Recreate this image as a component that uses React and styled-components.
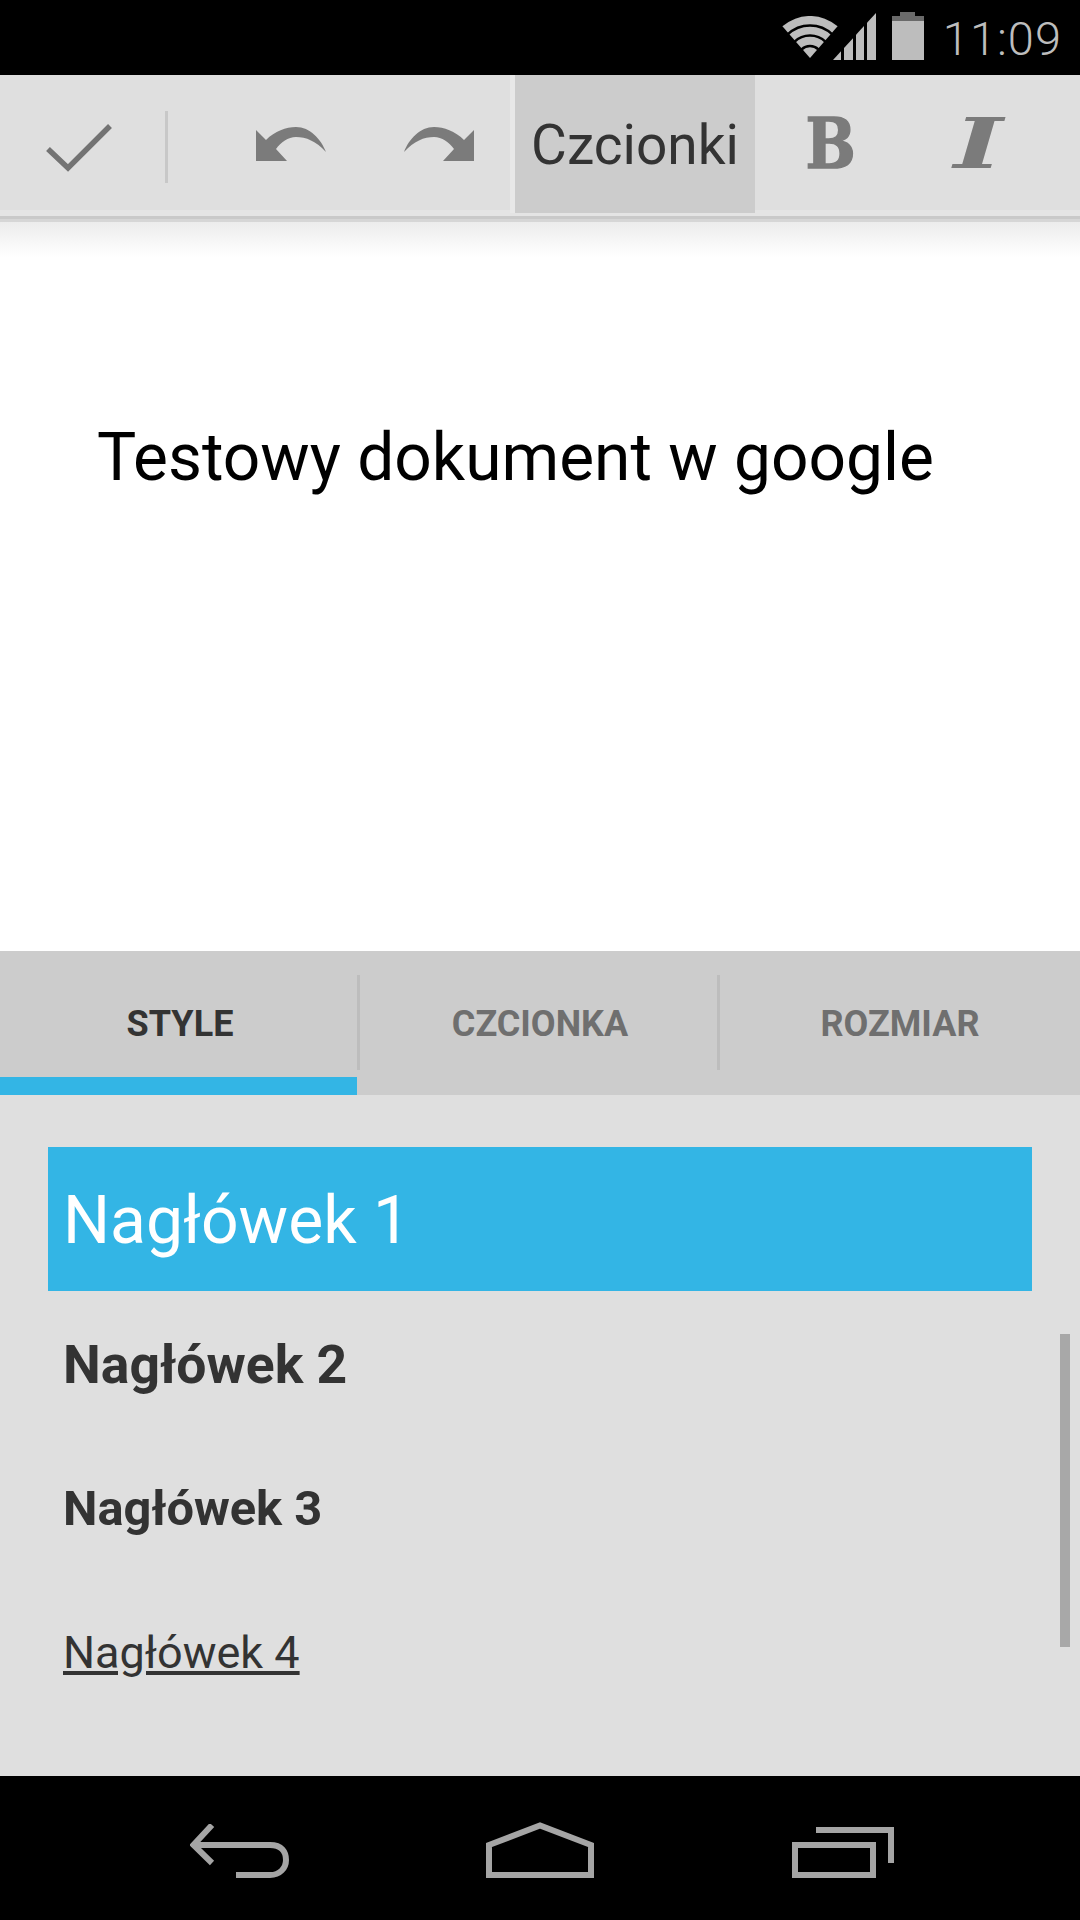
import React from "react";
import styled, { createGlobalStyle } from "styled-components";

const Global = createGlobalStyle`
  html, body { margin: 0; padding: 0; background: #fff; }
`;

const Screen = styled.div`
  width: 1080px;
  height: 1920px;
  display: flex;
  flex-direction: column;
  overflow: hidden;
  font-family: Roboto, "Liberation Sans", sans-serif;
`;

const StatusBar = styled.div`
  height: 75px;
  flex: none;
  background: #000;
  display: flex;
  align-items: flex-start;
  justify-content: flex-end;
  padding-right: 18px;
`;

const StatusIcon = styled.svg`
  display: block;
  flex: none;
  margin-top: ${(p) => p.$top}px;
  margin-right: ${(p) => p.$right || 0}px;
`;

const Clock = styled.span`
  color: #bdbdbd;
  font-size: 47px;
  font-weight: 300;
  line-height: 54px;
  margin-top: 12px;
  letter-spacing: 1px;
`;

const Toolbar = styled.div`
  flex: none;
  height: 147px;
  box-sizing: border-box;
  background: linear-gradient(#dfdfdf 135px, #e4e4e4 135px);
  display: flex;
  border-bottom: 3px solid #d6d6d6;
  position: relative;
`;

const ToolbarLine = styled.div`
  position: absolute;
  left: 0;
  right: 0;
  top: 141px;
  height: 3px;
  background: #c9c9c9;
`;

const CheckCell = styled.div`
  width: 165px;
  height: 138px;
  flex: none;
  box-sizing: border-box;
  padding: 49px 0 0 46px;
`;

const CheckMark = styled.svg`
  display: block;
`;

const Separator = styled.div`
  width: 3px;
  height: 72px;
  margin-top: 36px;
  background: #c8c8c8;
  flex: none;
`;

const ActionCell = styled.div`
  width: 138px;
  height: 138px;
  flex: none;
  display: flex;
  align-items: center;
  justify-content: center;
  margin-left: ${(p) => p.$left || 0}px;
`;

const ToolbarDivider = styled.div`
  width: 5px;
  height: 138px;
  margin-left: 2px;
  background: #e8e8e8;
  flex: none;
`;

const FontMenu = styled.div`
  width: 240px;
  height: 138px;
  flex: none;
  background: #cccccc;
  color: #333;
  font-size: 55px;
  display: flex;
  align-items: center;
  justify-content: center;
  box-sizing: border-box;
  padding-top: 2px;
`;

const FormatCell = styled.div`
  width: ${(p) => p.$w}px;
  height: 138px;
  flex: none;
  display: flex;
  align-items: center;
  justify-content: center;
  color: #7b7b7b;
  font-family: "DejaVu Serif", serif;
  font-weight: 700;
  font-style: ${(p) => (p.$italic ? "italic" : "normal")};
  font-size: 70px;
  line-height: 70px;
  -webkit-text-stroke: ${(p) => (p.$italic ? "0" : "1.5px #7b7b7b")};
`;

const FormatGlyph = styled.span`
  display: block;
  transform: scaleX(${(p) => p.$sx});
`;

const Document = styled.div`
  flex: none;
  height: 729px;
  box-sizing: border-box;
  padding: 198px 0 0 97px;
  background: linear-gradient(#ececec 0, #fff 35px);
  color: #000;
  font-size: 65.8px;
  line-height: 75px;
`;

const Tabs = styled.div`
  flex: none;
  height: 144px;
  display: flex;
  background: #cccccc;
`;

const Tab = styled.div`
  flex: 1;
  position: relative;
  display: flex;
  align-items: center;
  justify-content: center;
  box-sizing: border-box;
  padding-top: 2px;
  font-size: 36px;
  font-weight: 700;
  color: ${(p) => (p.$active ? "#333" : "#6f6f6f")};
  &::before {
    content: "";
    display: ${(p) => (p.$last ? "none" : "block")};
    position: absolute;
    right: 0;
    top: 24px;
    width: 3px;
    height: 95px;
    background: #bdbdbd;
  }
  &::after {
    content: "";
    display: ${(p) => (p.$active ? "block" : "none")};
    position: absolute;
    left: 0;
    right: 3px;
    bottom: 0;
    height: 18px;
    background: #33b5e5;
  }
`;

const Panel = styled.div`
  flex: none;
  height: 681px;
  box-sizing: border-box;
  position: relative;
  background: #dfdfdf;
  padding: 52px 48px 0;
`;

const StyleRow = styled.div`
  height: 144px;
  box-sizing: border-box;
  padding: 3px 0 0 15px;
  display: flex;
  align-items: center;
  color: ${(p) => (p.$selected ? "#fff" : "#333")};
  background: ${(p) => (p.$selected ? "#33b5e5" : "transparent")};
  font-size: ${(p) => p.$size}px;
  font-weight: ${(p) => p.$weight || 400};
  text-decoration: ${(p) => (p.$underline ? "underline" : "none")};
`;

const ScrollThumb = styled.div`
  position: absolute;
  left: 1060px;
  top: 239px;
  width: 10px;
  height: 313px;
  background: #a8a8a8;
`;

const NavBar = styled.div`
  flex: none;
  height: 144px;
  background: #000;
  display: flex;
  align-items: flex-start;
  padding-left: 190px;
`;

const NavIcon = styled.svg`
  display: block;
  flex: none;
  margin-top: ${(p) => p.$top}px;
  margin-right: ${(p) => p.$right || 0}px;
`;

function Wifi() {
  const arc = (r) => {
    const a = (44 * Math.PI) / 180;
    const dx = r * Math.sin(a);
    const dy = r * Math.cos(a);
    return `M${29 - dx} ${42 - dy}A${r} ${r} 0 0 1 ${29 + dx} ${42 - dy}`;
  };
  return (
    <StatusIcon $top={16} $right={-6} width="58" height="42" viewBox="0 0 58 42">
      <path d="M29 42L1.4 10.3A42 42 0 0 1 56.6 10.3Z" fill="#bdbdbd" />
      <g fill="none" stroke="#000" strokeWidth="2.6">
        <path d={arc(32.5)} />
        <path d={arc(22.5)} />
        <path d={arc(12)} />
      </g>
    </StatusIcon>
  );
}

function Signal() {
  const bar = (a, b) => {
    const t = (x) => 47 - (47 * x) / 43;
    return `${a},47 ${a},${t(a)} ${b},${t(b)} ${b},47`;
  };
  return (
    <StatusIcon $top={13} $right={16} width="43" height="47" viewBox="0 0 43 47">
      {[[0, 8], [11, 20], [23, 31], [34, 43]].map(([a, b]) => (
        <polygon key={a} points={bar(a, b)} fill="#bdbdbd" />
      ))}
    </StatusIcon>
  );
}

function Battery() {
  return (
    <StatusIcon $top={12} $right={19} width="32" height="48" viewBox="0 0 32 48">
      <rect x="8" width="15" height="5" fill="#6a6a6a" />
      <rect y="4" width="32" height="5" fill="#6a6a6a" />
      <rect y="9" width="32" height="39" fill="#bdbdbd" />
    </StatusIcon>
  );
}

const Arrow = styled.svg`
  display: block;
  transform: ${(p) => (p.$flip ? "scaleX(-1)" : "none")};
`;

function Curved({ flip }) {
  return (
    <Arrow $flip={flip} width="70" height="34" viewBox="0 0 70 34">
      <path
        d="M0 3L10 13C19 4 30 0 40 0C54 0 65 12 70 25C60 14 50 10 40 10C32 10 25 15 20 22L31 34L0 34Z"
        fill="#7b7b7b"
      />
    </Arrow>
  );
}

export default function App() {
  return (
    <Screen>
      <Global />
      <StatusBar>
        <Wifi />
        <Signal />
        <Battery />
        <Clock>11:09</Clock>
      </StatusBar>
      <Toolbar>
        <CheckCell>
          <CheckMark width="66" height="48" viewBox="0 0 66 48">
            <path d="M2 25L22 44L64 2" fill="none" stroke="#737373" strokeWidth="5.5" />
          </CheckMark>
        </CheckCell>
        <Separator />
        <ActionCell $left={54}>
          <Curved />
        </ActionCell>
        <ActionCell $left={10}>
          <Curved flip />
        </ActionCell>
        <ToolbarDivider />
        <FontMenu>Czcionki</FontMenu>
        <FormatCell $w={152}>
          <FormatGlyph $sx={0.85}>B</FormatGlyph>
        </FormatCell>
        <FormatCell $w={142} $italic>
          <FormatGlyph $sx={1.5}>I</FormatGlyph>
        </FormatCell>
        <ToolbarLine />
      </Toolbar>
      <Document>Testowy dokument w google</Document>
      <Tabs>
        <Tab $active>STYLE</Tab>
        <Tab>CZCIONKA</Tab>
        <Tab $last>ROZMIAR</Tab>
      </Tabs>
      <Panel>
        <StyleRow $selected $size={66}>Nagłówek 1</StyleRow>
        <StyleRow $size={53.5} $weight={700}>Nagłówek 2</StyleRow>
        <StyleRow $size={48.8} $weight={700}>Nagłówek 3</StyleRow>
        <StyleRow $size={45} $underline>Nagłówek 4</StyleRow>
        <ScrollThumb />
      </Panel>
      <NavBar>
        <NavIcon $top={48} $right={197} width="99" height="54" viewBox="0 0 99 54">
          <path
            d="M22 1L3.5 21L22 39M3.5 21H80C92 21 96 28 96 36C96 44 90 51 80 51H46"
            fill="none"
            stroke="#a5a5a5"
            strokeWidth="6"
          />
        </NavIcon>
        <NavIcon $top={46} $right={198} width="108" height="56" viewBox="0 0 108 56">
          <path d="M3 23L54 3.5L105 23V53H3Z" fill="none" stroke="#a5a5a5" strokeWidth="6" />
        </NavIcon>
        <NavIcon $top={51} width="102" height="51" viewBox="0 0 102 51">
          <path d="M24 3H99V36" fill="none" stroke="#a5a5a5" strokeWidth="6" />
          <rect x="3" y="18" width="78" height="30" fill="none" stroke="#a5a5a5" strokeWidth="6" />
        </NavIcon>
      </NavBar>
    </Screen>
  );
}
